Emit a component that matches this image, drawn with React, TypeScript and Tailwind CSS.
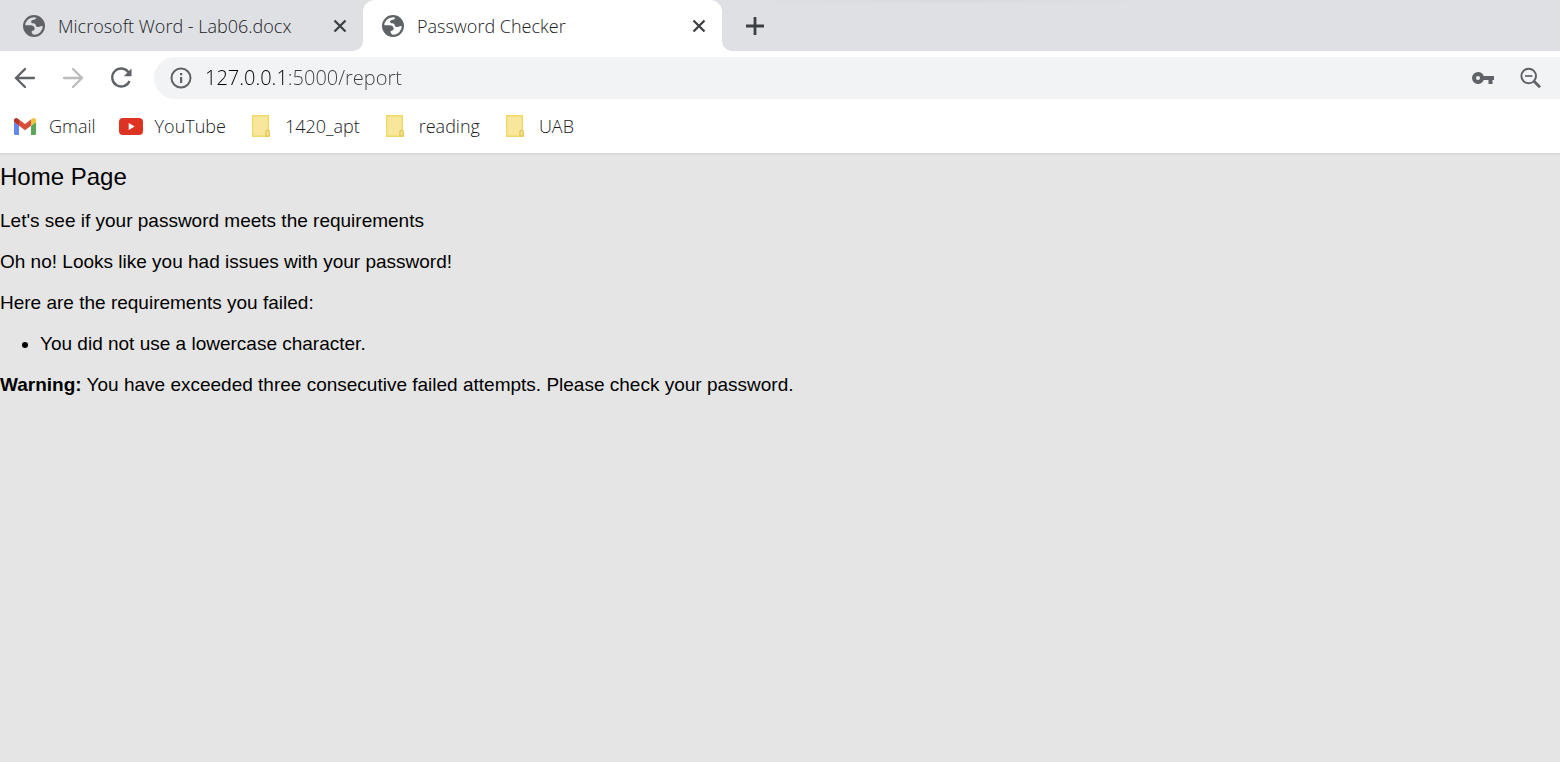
import type { ReactNode } from "react";

const ui = "font-['Open_Sans','Noto_Sans',sans-serif]";

function GlobeIcon() {
  return (
    <svg className="size-[22px] shrink-0" viewBox="0 0 22 22" aria-hidden="true">
      <circle cx="11" cy="11" r="9.9" fill="none" stroke="#5f6368" strokeWidth="2.2" />
      <path
        fill="#5f6368"
        d="M1.500 10.300h6c2.600 0 4.200 1.400 4.200 3.300 0 1.700-1.200 2.400-3 2.400v1.600c0 .9.700 1.500 1.800 1.700l-2 1.200C4.300 19.500 1 15.500 1.500 10.300zM13.500 1.500c0 2-1 3-2.700 3.200-1.900.2-2.700.9-2.700 2 0 1 .8 1.500 2 1.500 1.700 0 2.400.7 2.600 2 .3 1.400 1.200 1.800 2.500 1.800 1.500 0 2.200-.9 3.700-.9h1.700C20.600 6 17.500 2.500 13.500 1.500z"
      />
    </svg>
  );
}

function CloseIcon() {
  return (
    <svg className="size-3.5" viewBox="0 0 14 14" fill="none" stroke="#3c4043" strokeWidth="2.300" aria-hidden="true">
      <path d="M1.500 1.500l11 11M12.500 1.500l-11 11" />
    </svg>
  );
}

function Arrow({ forward = false }: { forward?: boolean }) {
  return (
    <svg
      className={forward ? "size-[22px] text-[#babcbe]" : "size-[22px] text-[#5f6368]"}
      viewBox="0 0 22 22"
      fill="none"
      stroke="currentColor"
      strokeWidth="2.300"
      strokeLinecap="round"
      aria-hidden="true"
    >
      <path d={forward ? "M2 11h18M11 2l9 9-9 9" : "M20 11H2M11 2l-9 9 9 9"} />
    </svg>
  );
}

function GmailIcon() {
  return (
    <svg className="h-[17px] w-[22px]" viewBox="0 0 22 17" aria-hidden="true">
      <path fill="#6288f0" d="M0 4l5 3.700V17H1.500A1.500 1.500 0 010 15.500z" />
      <path fill="#5aa65a" d="M22 4l-5 3.700V17h3.500a1.500 1.500 0 001.500-1.500z" />
      <path fill="#d94f3d" d="M5 1.500l6 4.500 6-4.500v6.200l-6 4.500-6-4.500z" />
      <path fill="#b5342b" d="M0 4V2.300C0 .3 2.300-.7 4 .7l1 .8v6.200L0 4z" />
      <path fill="#f0c33c" d="M22 4V2.300c0-2-2.300-3-4-1.600l-1 .8v6.200L22 4z" />
    </svg>
  );
}

function YouTubeIcon() {
  return (
    <svg className="h-[17px] w-6" viewBox="0 0 24 17" aria-hidden="true">
      <rect width="24" height="17" rx="4" fill="#de3223" />
      <path fill="#fff" d="M9.700 5v7l6-3.500z" />
    </svg>
  );
}

function FolderIcon() {
  return (
    <svg className="h-[22px] w-[18px]" viewBox="0 0 18 22" aria-hidden="true">
      <path d="M.7.700h15.600v20.600H.7z" fill="#f8e69c" stroke="#f2d967" strokeWidth="1.400" />
      <path d="M14 21v-4.500c0-1.600 3.300-1.600 3.300 0v4.700H14z" fill="#f8e69c" stroke="#e3c651" strokeWidth="1.300" />
    </svg>
  );
}

function Bookmark({ icon, label }: { icon: ReactNode; label: string }) {
  return (
    <a href="#" className="flex items-center gap-3">
      <span className="flex w-6 justify-center">{icon}</span>
      <span>{label}</span>
    </a>
  );
}

function Tab({ title }: { title: string }) {
  return (
    <div className="flex h-full items-center gap-[13px]">
      <GlobeIcon />
      <span className="grow truncate">{title}</span>
      <button type="button" aria-label={`Close ${title}`}>
        <CloseIcon />
      </button>
    </div>
  );
}

export default function App() {
  return (
    <div className="flex min-h-screen flex-col bg-[#e5e5e5]">
      <header className={`${ui} bg-white text-[18px] leading-6 font-light text-[#202124]`}>
        <div className="flex h-[51px]">
          <div className="w-[363px] rounded-br-[10px] bg-[#dee0e4] pr-4 pl-[23px]">
            <Tab title="Microsoft Word - Lab06.docx" />
          </div>
          <div className="w-[359px] bg-linear-to-b from-[#dee0e4] from-50% to-white to-50%">
            <div className="h-full rounded-t-[12px] bg-white pr-4 pl-[19px]">
              <Tab title="Password Checker" />
            </div>
          </div>
          <div className="flex grow items-center rounded-bl-[10px] bg-[#dee0e4] pl-6">
            <button type="button" aria-label="New tab">
              <svg className="size-[18px]" viewBox="0 0 18 18" stroke="#3c4043" strokeWidth="2.800" aria-hidden="true">
                <path d="M9 0v18M0 9h18" />
              </svg>
            </button>
            <div className="mb-auto ml-3 h-1 w-[350px] bg-radial-[at_50%_0%] from-[#d9dadd] to-[#dee0e4]" />
          </div>
        </div>

        <div className="mt-1.5 flex h-[42px] items-center">
          <div className="flex w-[154px] items-center gap-[26px] pl-3.5">
            <button type="button" aria-label="Back">
              <Arrow />
            </button>
            <button type="button" aria-label="Forward">
              <Arrow forward />
            </button>
            <button type="button" aria-label="Reload">
              <svg className="size-[22px]" viewBox="0 0 22 22" aria-hidden="true">
                <path d="M18.500 5.200A9 9 0 1019.500 14" fill="none" stroke="#5f6368" strokeWidth="2.300" />
                <path d="M21.500 1.500v7.700h-7.700z" fill="#5f6368" />
              </svg>
            </button>
          </div>
          <div className="flex h-full grow items-center rounded-l-full bg-[#f1f3f4] pr-[18px] pl-4">
            <svg className="size-[22px] shrink-0" viewBox="0 0 22 22" aria-hidden="true">
              <circle cx="11" cy="11" r="9.500" fill="none" stroke="#5f6368" strokeWidth="2" />
              <path d="M10 10h2.200v6H10zM10 6h2.200v2.200H10z" fill="#5f6368" />
            </svg>
            <input
              type="text"
              aria-label="Address"
              defaultValue="127.0.0.1:5000/report"
              className="ml-[13px] grow bg-[linear-gradient(to_right,#000000_82px,#3c4043_82px)] bg-clip-text text-[20px] text-transparent outline-none"
            />
            <button type="button" aria-label="Saved passwords">
              <svg className="h-3 w-[22px]" viewBox="0 0 22 12" fill="#5f6368" aria-hidden="true">
                <path
                  fillRule="evenodd"
                  d="M6 0a6 6 0 015.700 4H22v4h-1.500v4h-4V8h-4.800A6 6 0 116 0zm0 4a2 2 0 100 4 2 2 0 000-4z"
                />
              </svg>
            </button>
            <button type="button" aria-label="Zoom" className="ml-[26px]">
              <svg className="size-[22px]" viewBox="0 0 22 22" fill="none" stroke="#5f6368" aria-hidden="true">
                <circle cx="8.700" cy="9" r="7.300" strokeWidth="2" />
                <path d="M5 9h7.400" strokeWidth="1.700" />
                <path d="M14 14.300l6 6" strokeWidth="2.800" />
              </svg>
            </button>
          </div>
        </div>

        <nav aria-label="Bookmarks" className="flex h-14 items-center gap-[23px] border-b-2 border-[#dadada] pl-[13px]">
          <Bookmark icon={<GmailIcon />} label="Gmail" />
          <Bookmark icon={<YouTubeIcon />} label="YouTube" />
          <Bookmark icon={<FolderIcon />} label="1420_apt" />
          <Bookmark icon={<FolderIcon />} label="reading" />
          <Bookmark icon={<FolderIcon />} label="UAB" />
        </nav>
      </header>

      <main className="flex flex-col gap-[19px] pt-2 font-['Liberation_Sans',Arial,sans-serif] text-[19px] leading-[22px] text-black">
        <h1 className="text-2xl leading-7">Home Page</h1>
        <p>Let's see if your password meets the requirements</p>
        <p>Oh no! Looks like you had issues with your password!</p>
        <p>Here are the requirements you failed:</p>
        <ul className="list-disc pl-10">
          <li>You did not use a lowercase character.</li>
        </ul>
        <p>
          <strong>Warning:</strong> You have exceeded three consecutive failed attempts. Please check your password.
        </p>
      </main>
    </div>
  );
}
